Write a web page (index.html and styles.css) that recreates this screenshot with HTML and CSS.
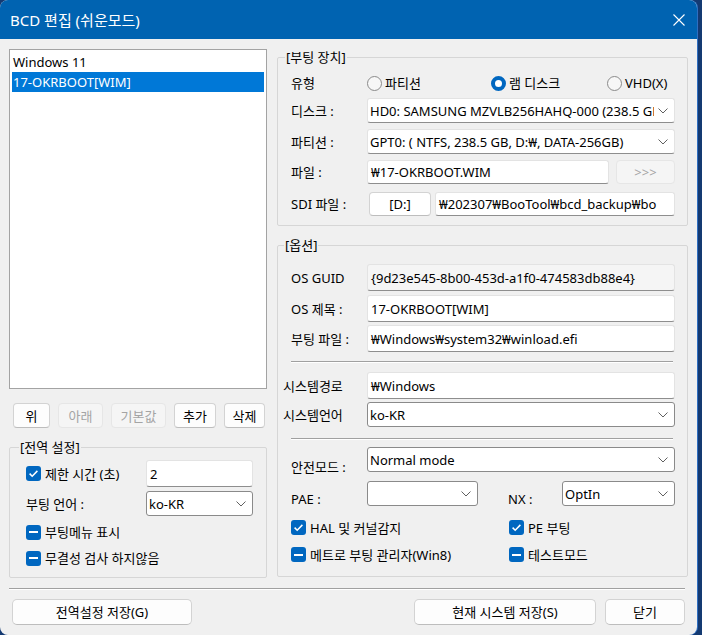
FILE: index.html
```html
<!DOCTYPE html>
<html lang="ko">
<head>
<meta charset="utf-8">
<title>BCD 편집 (쉬운모드)</title>
<link rel="stylesheet" href="styles.css">
</head>
<body>
<div class="window">
  <div class="titlebar">
    <span class="title">BCD 편집 (쉬운모드)</span>
    <svg class="close" width="12" height="12" viewBox="0 0 12 12"><path d="M0.5 0.5 L11.5 11.5 M11.5 0.5 L0.5 11.5" stroke="#fff" stroke-width="1.1" fill="none"/></svg>
  </div>
  <div class="content">
    <div class="main">
      <div class="left">
        <div class="listbox">
          <div class="item">Windows 11</div>
          <div class="item sel">17-OKRBOOT[WIM]</div>
        </div>
        <div class="btnrow">
          <button class="btn w-up">위</button>
          <button class="btn dis w-down">아래</button>
          <button class="btn dis w-def">기본값</button>
          <button class="btn w-add">추가</button>
          <button class="btn w-del">삭제</button>
        </div>
        <fieldset class="group global">
          <legend>[전역 설정]</legend>
          <div class="row h27">
            <label class="chk g-lbl"><span class="box on"><svg width="15" height="15" viewBox="0 0 15 15"><path d="M3.6 7.6 L6.2 10.2 L11.4 4.9" stroke="#fff" stroke-width="1.5" fill="none"/></svg></span>제한 시간 (초)</label>
            <div class="tb g-in">2</div>
          </div>
          <div class="row h25 mt4">
            <span class="g-lbl">부팅 언어 :</span>
            <div class="dd g-in"><span class="cval">ko-KR</span><span class="chev"><svg width="10" height="6" viewBox="0 0 10 6"><path d="M0.5 0.5 L5 5 L9.5 0.5" stroke="#606060" fill="none"/></svg></span></div>
          </div>
          <div class="row h18 mt7">
            <label class="chk"><span class="box ind"><i></i></span>부팅메뉴 표시</label>
          </div>
          <div class="row h18 mt8">
            <label class="chk"><span class="box ind"><i></i></span>무결성 검사 하지않음</label>
          </div>
        </fieldset>
      </div>
      <div class="right">
        <fieldset class="group boot">
          <legend>[부팅 장치]</legend>
          <div class="row h22">
            <span class="lbl">유형</span>
            <label class="radio r1"><span class="rb"></span>파티션</label>
            <label class="radio r2"><span class="rb on"></span>램 디스크</label>
            <label class="radio r3"><span class="rb"></span>VHD(X)</label>
          </div>
          <div class="row h25 mt4">
            <span class="lbl">디스크 :</span>
            <div class="cb fill"><span class="cval">HD0: SAMSUNG MZVLB256HAHQ-000 (238.5 GB</span><span class="chev"><svg width="10" height="6" viewBox="0 0 10 6"><path d="M0.5 0.5 L5 5 L9.5 0.5" stroke="#606060" fill="none"/></svg></span></div>
          </div>
          <div class="row h25 mt6">
            <span class="lbl">파티션 :</span>
            <div class="cb fill"><span class="cval">GPT0: ( NTFS, 238.5 GB, D:₩, DATA-256GB)</span><span class="chev"><svg width="10" height="6" viewBox="0 0 10 6"><path d="M0.5 0.5 L5 5 L9.5 0.5" stroke="#606060" fill="none"/></svg></span></div>
          </div>
          <div class="row h24 mt6">
            <span class="lbl">파일 :</span>
            <div class="tb file">₩17-OKRBOOT.WIM</div>
            <button class="btn dis more">&gt;&gt;&gt;</button>
          </div>
          <div class="row h24 mt8">
            <span class="lbl">SDI 파일 :</span>
            <button class="btn drive">[D:]</button>
            <div class="tb fill">₩202307₩BooTool₩bcd_backup₩bo</div>
          </div>
        </fieldset>
        <fieldset class="group options">
          <legend>[옵션]</legend>
          <div class="row h27">
            <span class="lbl">OS GUID</span>
            <div class="tb ro fill">{9d23e545-8b00-453d-a1f0-474583db88e4}</div>
          </div>
          <div class="row h27 mt4">
            <span class="lbl">OS 제목 :</span>
            <div class="tb fill">17-OKRBOOT[WIM]</div>
          </div>
          <div class="row h27 mt3">
            <span class="lbl">부팅 파일 :</span>
            <div class="tb fill">₩Windows₩system32₩winload.efi</div>
          </div>
          <div class="sep mt9"></div>
          <div class="row h27 mt9">
            <span class="lbl wide">시스템경로</span>
            <div class="tb fill">₩Windows</div>
          </div>
          <div class="row h25 mt3">
            <span class="lbl wide">시스템언어</span>
            <div class="dd fill"><span class="cval">ko-KR</span><span class="chev"><svg width="10" height="6" viewBox="0 0 10 6"><path d="M0.5 0.5 L5 5 L9.5 0.5" stroke="#606060" fill="none"/></svg></span></div>
          </div>
          <div class="sep mt11"></div>
          <div class="row h25 mt7">
            <span class="lbl low3">안전모드 :</span>
            <div class="dd fill"><span class="cval">Normal mode</span><span class="chev"><svg width="10" height="6" viewBox="0 0 10 6"><path d="M0.5 0.5 L5 5 L9.5 0.5" stroke="#606060" fill="none"/></svg></span></div>
          </div>
          <div class="row h25 mt9">
            <span class="lbl low1">PAE :</span>
            <div class="dd pae"><span class="cval"></span><span class="chev"><svg width="10" height="6" viewBox="0 0 10 6"><path d="M0.5 0.5 L5 5 L9.5 0.5" stroke="#606060" fill="none"/></svg></span></div>
            <span class="lbl nx low1">NX :</span>
            <div class="dd fill"><span class="cval">OptIn</span><span class="chev"><svg width="10" height="6" viewBox="0 0 10 6"><path d="M0.5 0.5 L5 5 L9.5 0.5" stroke="#606060" fill="none"/></svg></span></div>
          </div>
          <div class="row h19 mt12">
            <label class="chk o1"><span class="box on"><svg width="15" height="15" viewBox="0 0 15 15"><path d="M3.6 7.6 L6.2 10.2 L11.4 4.9" stroke="#fff" stroke-width="1.5" fill="none"/></svg></span>HAL 및 커널감지</label>
            <label class="chk"><span class="box on"><svg width="15" height="15" viewBox="0 0 15 15"><path d="M3.6 7.6 L6.2 10.2 L11.4 4.9" stroke="#fff" stroke-width="1.5" fill="none"/></svg></span>PE 부팅</label>
          </div>
          <div class="row h19 mt8">
            <label class="chk o1"><span class="box ind"><i></i></span>메트로 부팅 관리자(Win8)</label>
            <label class="chk"><span class="box ind"><i></i></span>테스트모드</label>
          </div>
        </fieldset>
      </div>
    </div>
    <div class="footsep"></div>
    <div class="footer">
      <button class="btn fb1">전역설정 저장(G)</button>
      <span class="spacer"></span>
      <button class="btn fb2">현재 시스템 저장(S)</button>
      <button class="btn fb3">닫기</button>
    </div>
  </div>
</div>
</body>
</html>
```
FILE: styles.css
```css
html, body {
  margin: 0;
  height: 100%;
  background: #143a72;
}
body {
  font-family: "Noto Sans", "Noto Sans CJK KR", sans-serif;
  font-size: 13px;
  line-height: 16px;
  color: #000;
  overflow: hidden;
}
.window {
  width: 697px;
  height: 635px;
  background: #f0f0f0;
  border-radius: 8px;
  overflow: hidden;
  box-shadow: 1px 0 0 #2f6fc2;
}
.titlebar {
  height: 39px;
  background: #0063b1;
  color: #fff;
  display: flex;
  align-items: center;
  justify-content: space-between;
  padding: 0 12px 0 10px;
  box-sizing: border-box;
}
.title {
  font-size: 15px;
  line-height: 20px;
}
.content {
  padding: 10px 9px 0 9px;
}
.main {
  display: flex;
  gap: 10px;
}
.left {
  width: 258px;
  display: flex;
  flex-direction: column;
}
.right {
  width: 411px;
  display: flex;
  flex-direction: column;
}
.listbox {
  height: 340px;
  box-sizing: border-box;
  border: 1px solid #a3a3a3;
  background: #fff;
  padding: 2px;
}
.item {
  height: 20px;
  line-height: 20px;
  padding-left: 1px;
}
.item.sel {
  background: #0078d7;
  color: #fff;
}
.btn {
  font: inherit;
  color: #000;
  height: 25px;
  box-sizing: border-box;
  border: 1px solid #d3d3d3;
  border-bottom-color: #bdbdbd;
  border-radius: 4px;
  background: #fdfdfd;
  padding: 0;
  display: flex;
  align-items: center;
  justify-content: center;
}
.btn.dis {
  background: #f5f5f5;
  border-color: #e6e6e6;
  color: #a4a4a4;
}
.btnrow {
  display: flex;
  gap: 8px;
  margin: 14px 0 0 4px;
}
.w-up { width: 37px; }
.w-down { width: 45px; }
.w-def { width: 55px; }
.w-add { width: 42px; }
.w-del { width: 41px; }

.group {
  margin: 0;
  border: 1px solid #d6d6d6;
  border-radius: 2px;
  min-width: 0;
}
.group legend {
  padding: 0 1px;
  line-height: 16px;
}
.global {
  margin-top: 11px;
  padding: 5px 13px 10px 16px;
}
.global legend { margin-left: -7px; }
.boot {
  padding: 7px 12px 9px 13px;
}
.boot legend { margin-left: -6px; }
.options {
  margin-top: 11px;
  padding: 11px 12px 12px 13px;
}
.options legend { margin-left: -7px; }

.row {
  display: flex;
  align-items: center;
}
.h18 { height: 18px; }
.h19 { height: 19px; }
.h22 { height: 22px; }
.h24 { height: 24px; }
.h25 { height: 25px; }
.h27 { height: 27px; }
.mt3 { margin-top: 3px; }
.mt4 { margin-top: 4px; }
.mt6 { margin-top: 6px; }
.mt7 { margin-top: 7px; }
.mt8 { margin-top: 8px; }
.mt9 { margin-top: 9px; }
.mt11 { margin-top: 11px; }
.mt12 { margin-top: 12px; }

.row > .tb, .row > .cb, .row > .dd, .row > .btn {
  height: 100%;
}
.g-lbl { width: 120px; flex: none; }
.g-in { width: 107px; }
.lbl {
  width: 76px;
  flex: none;
  white-space: nowrap;
}
.lbl.wide {
  margin-left: -8px;
  width: 84px;
}
.lbl.low3 { align-self: flex-end; margin-bottom: -3px; }
.lbl.low1 { align-self: flex-end; margin-bottom: -1px; }
.lbl.nx { width: 54px; margin-left: 30px; }
.fill { flex: 1; min-width: 0; }
.pae { width: 111px; flex: none; }

.tb, .cb, .dd {
  box-sizing: border-box;
  background: #fff;
  display: flex;
  align-items: center;
  white-space: nowrap;
  overflow: hidden;
  padding: 0 0 0 3px;
  border-radius: 3px;
}
.tb, .cb {
  border: 1px solid #e3e3e3;
  border-bottom-color: #8e8e8e;
}
.tb.ro {
  background: #f5f5f5;
}
.dd {
  border: 1px solid #8a8a8a;
  padding-left: 2px;
}
.cb { padding-left: 2px; }
.cval {
  flex: 1;
  min-width: 0;
  overflow: hidden;
  white-space: nowrap;
}
.chev {
  width: 18px;
  padding-right: 2px;
  flex: none;
  display: flex;
  justify-content: center;
  align-items: center;
}
.file { width: 242px; flex: none; }
.more { width: 59px; margin-left: 7px; }
.drive { width: 62px; margin-left: 2px; margin-right: 4px; background: #fff; }

.radio {
  display: flex;
  align-items: center;
  gap: 3px;
  flex: none;
}
.r1 { width: 124px; }
.r2 { width: 116px; }
.rb {
  width: 15px;
  height: 15px;
  box-sizing: border-box;
  border-radius: 50%;
  border: 1px solid #8a8a8a;
  background: #f7f7f7;
  flex: none;
}
.rb.on {
  border: 4px solid #0067c0;
  background: #fff;
}

.chk {
  display: flex;
  align-items: center;
  gap: 4px;
  white-space: nowrap;
}
.o1 { width: 218px; flex: none; }
.box {
  width: 15px;
  height: 15px;
  border-radius: 3px;
  background: #0067c0;
  flex: none;
  display: flex;
  align-items: center;
  justify-content: center;
}
.box svg { display: block; }
.box.ind i {
  display: block;
  width: 9px;
  height: 2px;
  background: #fff;
}

.sep {
  height: 0;
  border-top: 1px solid #a0a0a0;
  border-bottom: 1px solid #fff;
  margin-right: 2px;
}
.footsep {
  margin-top: 10px;
  margin-right: 3px;
  height: 0;
  border-top: 1px solid #a0a0a0;
  border-bottom: 1px solid #fff;
}
.footer {
  display: flex;
  gap: 9px;
  margin-top: 9px;
  padding: 0 3px;
}
.footer .btn { height: 26px; border-radius: 5px; }
.spacer { flex: 1; }
.fb1 { width: 180px; }
.fb2 { width: 182px; }
.fb3 { width: 80px; }
```
